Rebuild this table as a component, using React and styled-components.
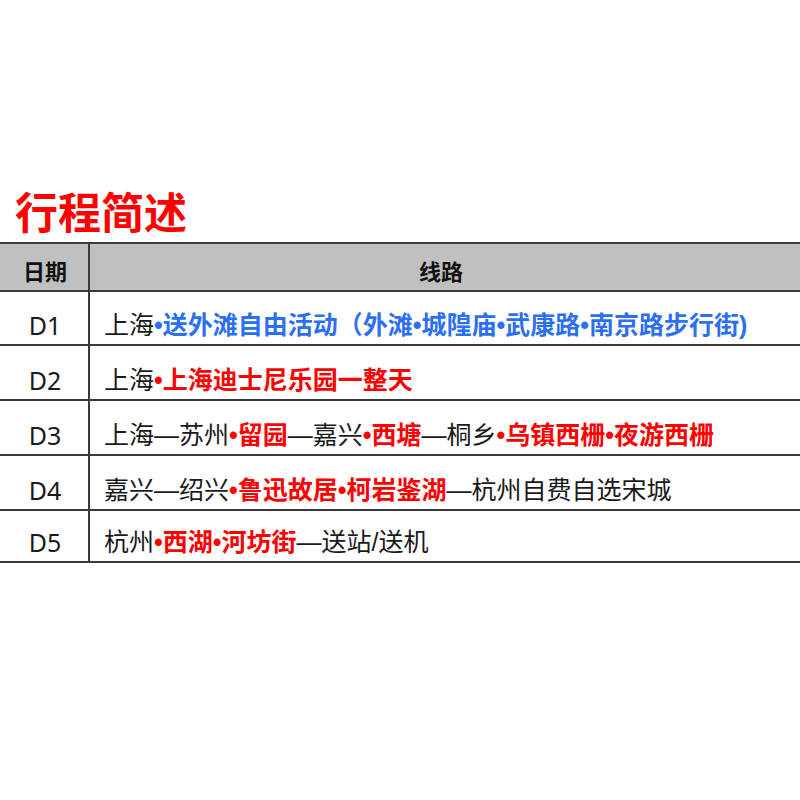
import React from "react";
import styled, { createGlobalStyle } from "styled-components";

const GlobalStyle = createGlobalStyle`
  html, body {
    margin: 0;
    padding: 0;
    background: #ffffff;
    overflow: hidden;
  }
  body {
    font-family: "Noto Sans CJK SC", "Noto Sans", sans-serif;
  }
`;

const days = [
  {
    day: "D1",
    h: 54,
    parts: [
      ["上海", "plain"],
      ["•送外滩自由活动（外滩•城隍庙•武康路•南京路步行街)", "blue"],
    ],
  },
  {
    day: "D2",
    h: 55,
    parts: [
      ["上海", "plain"],
      ["•上海迪士尼乐园一整天", "red"],
    ],
  },
  {
    day: "D3",
    h: 55,
    parts: [
      ["上海—苏州", "plain"],
      ["•留园", "red"],
      ["—嘉兴", "plain"],
      ["•西塘", "red"],
      ["—桐乡", "plain"],
      ["•乌镇西栅•夜游西栅", "red"],
    ],
  },
  {
    day: "D4",
    h: 55,
    parts: [
      ["嘉兴—绍兴", "plain"],
      ["•鲁迅故居•柯岩鉴湖", "red"],
      ["—杭州自费自选宋城", "plain"],
    ],
  },
  {
    day: "D5",
    h: 52,
    parts: [
      ["杭州", "plain"],
      ["•西湖•河坊街", "red"],
      ["—送站/送机", "plain"],
    ],
  },
];

export default function App() {
  return (
    <Page>
      <GlobalStyle />
      <Title>行程简述</Title>
      <Table>
        <HeadCell>日期</HeadCell>
        <HeadCell wide>线路</HeadCell>
        {days.map((d) => (
          <React.Fragment key={d.day}>
            <DayCell h={d.h}>{d.day}</DayCell>
            <RouteCell h={d.h}>
              {d.parts.map(([text, tone], i) => (
                <Seg key={i} tone={tone}>
                  {text}
                </Seg>
              ))}
            </RouteCell>
          </React.Fragment>
        ))}
      </Table>
    </Page>
  );
}

const Page = styled.div`
  width: 800px;
  height: 800px;
  padding-top: 180px;
  box-sizing: border-box;
`;

const Title = styled.h1`
  margin: 0 0 0 15px;
  height: 62px;
  font-size: 43px;
  line-height: 60px;
  font-weight: 700;
  color: #ff0000;
`;

const Table = styled.div`
  display: grid;
  grid-template-columns: 90px 1fr;
  width: 806px;
  margin-left: -2px;
  border-top: 2px solid #3a3a3a;
`;

const HeadCell = styled.div`
  box-sizing: content-box;
  height: 40px;
  padding-top: 6px;
  background: #c0c0c0;
  border-bottom: 2px solid #3a3a3a;
  border-left: ${(p) => (p.wide ? "2px solid #3a3a3a" : "none")};
  display: flex;
  align-items: center;
  justify-content: center;
  font-size: 22px;
  font-weight: 700;
  color: #111;
  ${(p) => (p.wide ? "padding-right: 12px;" : "padding-left: 4px;")}
`;

const DayCell = styled.div`
  box-sizing: border-box;
  height: ${(p) => p.h}px;
  border-bottom: 2px solid #3a3a3a;
  display: flex;
  align-items: flex-end;
  justify-content: center;
  padding: 0 0 4px 4px;
  font-family: "Noto Sans", "Noto Sans CJK SC", sans-serif;
  font-size: 25px;
  line-height: 30px;
  color: #1a1a1a;
`;

const RouteCell = styled.div`
  box-sizing: border-box;
  height: ${(p) => p.h}px;
  border-bottom: 2px solid #3a3a3a;
  border-left: 2px solid #3a3a3a;
  display: flex;
  align-items: flex-end;
  padding: 0 0 4px 14px;
  font-family: "Liberation Sans", "Noto Sans CJK SC", sans-serif;
  font-size: 25px;
  line-height: 30px;
  white-space: nowrap;
  color: #1a1a1a;
`;

const toneColors = {
  plain: "#1a1a1a",
  red: "#ff0000",
  blue: "#2b6ff2",
};

const Seg = styled.span`
  color: ${(p) => toneColors[p.tone]};
  font-weight: ${(p) => (p.tone === "plain" ? 400 : 700)};
`;
